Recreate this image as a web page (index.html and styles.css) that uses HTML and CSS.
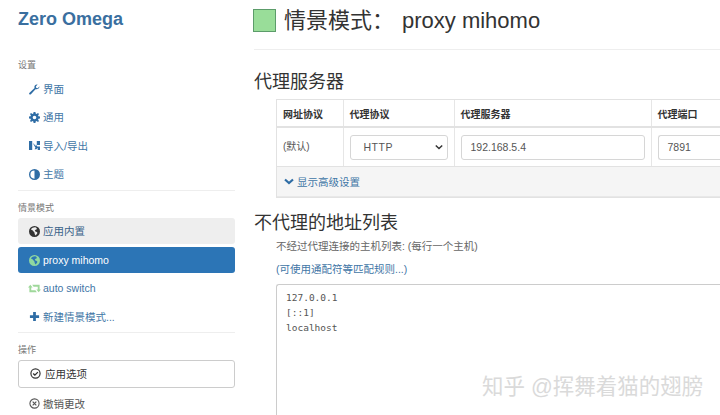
FILE: index.html
```html
<!DOCTYPE html>
<html lang="zh-CN">
<head>
    <meta charset="UTF-8">
    <title>Zero Omega</title>
    <link rel="stylesheet" href="styles.css">
</head>
<body>
    <div class="page">
        <aside class="sidebar">
            <h1 class="brand">Zero Omega</h1>
            <div class="nav-label first">设置</div>
            <a class="nav-item">
                <svg class="icon" viewBox="0 0 12 12"><path d="M11.400 2.600 9.400 4.500 7.800 4.200 7.500 2.600 9.400.6C7.600 0 5.700 1.300 5.900 3.400c0 .4.1.7.2 1L.6 9.500c-.7.7-.6 1.300-.2 1.700.5.5 1.100.5 1.700-.1l5-5.500c2.300.7 4.900-1.100 4.300-3.500z"/></svg>
                界面
            </a>
            <a class="nav-item">
                <svg class="icon" viewBox="0 0 12 12"><path fill-rule="evenodd" d="M5 0h2l.3 1.700 1 .4L9.800 1.100l1.100 1.100-1 1.500.4 1L12 5v2l-1.700.3-.4 1 1 1.500-1.100 1.100-1.500-1-1 .4L7 12H5l-.3-1.700-1-.4-1.500 1-1.100-1.100 1-1.500-.4-1L0 7V5l1.700-.3.4-1-1-1.500 1.100-1.100 1.500 1 1-.4zM6 4a2 2 0 1 0 0 4 2 2 0 0 0 0-4z"/></svg>
                通用
            </a>
            <a class="nav-item">
                <svg class="icon" viewBox="0 0 12 12"><path d="M0 1h3.500v10H0zM8.500 1H12v4.500H8.500zM4 3l3.500 3.500V5L9 7H12v4H9.500V8.500L8 10H6l1-1.500z"/></svg>
                导入/导出
            </a>
            <a class="nav-item">
                <svg class="icon" viewBox="0 0 12 12"><path fill-rule="evenodd" d="M6 0a6 6 0 1 1 0 12A6 6 0 0 1 6 0zm0 1.500a4.500 4.500 0 0 0 0 9z"/></svg>
                主题
            </a>
            <hr class="nav-rule">
            <div class="nav-label">情景模式</div>
            <a class="nav-item pill hover">
                <svg class="icon dark" viewBox="0 0 12 12"><path fill-rule="evenodd" d="M6 0a6 6 0 1 1 0 12A6 6 0 0 1 6 0zM2 3.500c.8 1 2 .8 2.500 2 .3 1 1.500.8 1.500 2 0 1 .5 2 1.200 2.800C8 9 9.500 8 9 7 8.500 6 7 6.500 6.500 5.500 6 4.500 7.500 4 8.500 3.500 8.800 3 8.500 2 7.500 1.500 5.500 1 3.500 1.800 2 3.500z"/></svg>
                应用内置
            </a>
            <a class="nav-item pill active">
                <svg class="icon green" viewBox="0 0 12 12"><path fill-rule="evenodd" d="M6 0a6 6 0 1 1 0 12A6 6 0 0 1 6 0zM2 3.500c.8 1 2 .8 2.500 2 .3 1 1.500.8 1.500 2 0 1 .5 2 1.200 2.800C8 9 9.500 8 9 7 8.500 6 7 6.500 6.500 5.500 6 4.500 7.500 4 8.500 3.500 8.800 3 8.500 2 7.500 1.500 5.500 1 3.500 1.800 2 3.500z"/></svg>
                proxy mihomo
            </a>
            <a class="nav-item">
                <svg class="icon wide light-green" viewBox="0 0 14 10"><path d="M2.500 1 5 4H3.500v3H8l1.500 2H1.500V4H0zM11.500 9 9 6h1.500V3H6L4.500 1h8v5H14z"/></svg>
                auto switch
            </a>
            <a class="nav-item">
                <svg class="icon" viewBox="0 0 12 12"><path d="M4.500 1h3v3.500H11v3H7.500V11h-3V7.500H1v-3h3.500z"/></svg>
                新建情景模式...
            </a>
            <hr class="nav-rule tight">
            <div class="nav-label">操作</div>
            <a class="apply-btn">
                <svg class="icon dark" viewBox="0 0 12 12"><circle cx="6" cy="6" r="5" fill="none" stroke="currentColor" stroke-width="1.300"/><path d="M3.500 6 5.300 7.800 8.600 4.500" fill="none" stroke="currentColor" stroke-width="1.500"/></svg>
                应用选项
            </a>
            <a class="discard">
                <svg class="icon dim" viewBox="0 0 12 12"><circle cx="6" cy="6" r="5" fill="none" stroke="currentColor" stroke-width="1.200"/><path d="M4 4l4 4M8 4l-4 4" fill="none" stroke="currentColor" stroke-width="1.300"/></svg>
                撤销更改
            </a>
        </aside>

        <main class="content">
            <div class="page-header">
                <span class="swatch"></span>
                <h2 class="page-title"><span>情景模式：</span><span class="profile-name">proxy mihomo</span></h2>
            </div>

            <h3 class="section-title">代理服务器</h3>
            <div class="proxy-box">
                <table class="proxy-table">
                    <thead>
                        <tr>
                            <th class="col-scheme">网址协议</th>
                            <th class="col-protocol">代理协议</th>
                            <th class="col-server">代理服务器</th>
                            <th class="col-port">代理端口</th>
                        </tr>
                    </thead>
                    <tbody>
                        <tr>
                            <td>(默认)</td>
                            <td>
                                <div class="fake-select">HTTP
                                    <svg class="caret" viewBox="0 0 10 6"><path d="M1 1l4 4 4-4" fill="none" stroke="currentColor" stroke-width="1.800"/></svg>
                                </div>
                            </td>
                            <td><div class="field">192.168.5.4</div></td>
                            <td class="cut"><div class="field">7891</div></td>
                        </tr>
                    </tbody>
                </table>
                <div class="proxy-footer">
                    <svg class="chevron" viewBox="0 0 10 7"><path d="M1 1.500l4 3.500 4-3.500" fill="none" stroke="currentColor" stroke-width="2.200"/></svg>
                    显示高级设置
                </div>
            </div>

            <h3 class="section-title bypass-title">不代理的地址列表</h3>
            <div class="bypass">
                <p class="help">不经过代理连接的主机列表: (每行一个主机)</p>
                <p class="help-link">(可使用通配符等匹配规则...)</p>
                <div class="bypass-list">127.0.0.1<br>[::1]<br>localhost</div>
            </div>
        </main>
    </div>
    <div class="watermark">知乎 @挥舞着猫的翅膀</div>
</body>
</html>
```

FILE: styles.css
```css
* {
    box-sizing: border-box;
    margin: 0;
    padding: 0;
}

html, body {
    width: 720px;
    height: 415px;
    overflow: hidden;
}

body {
    position: relative;
    font-family: "Liberation Sans", "Noto Sans CJK SC", sans-serif;
    font-size: 10px;
    line-height: 14px;
    color: #333;
    background-color: #fff;
}

.page {
    display: flex;
    height: 415px;
}

.sidebar {
    flex: none;
    width: 254px;
    padding: 9px 19px 0 18px;
}

.brand {
    font-size: 18px;
    line-height: 20px;
    font-weight: bold;
    color: #3a6f9f;
    margin-bottom: 30px;
}

.nav-label {
    font-size: 9px;
    line-height: 12px;
    color: #777;
    margin-bottom: 4px;
}

.nav-item {
    display: flex;
    align-items: center;
    gap: 3px;
    height: 28.300px;
    padding-left: 11px;
    font-size: 10.500px;
    color: #3f76a6;
}

.icon {
    flex: none;
    width: 11px;
    height: 11px;
    fill: #2f6da5;
    color: #2f6da5;
}

.icon.wide {
    width: 13px;
    margin-left: -1px;
    margin-right: -1px;
}

.icon.dark {
    fill: #333;
    color: #333;
}

.icon.dim {
    color: #555;
}

.icon.green {
    fill: #8fd8a0;
}

.icon.light-green {
    fill: #9fd89a;
}

.pill {
    height: 26px;
    border-radius: 3px;
}

.pill.hover {
    background-color: #eee;
    color: #3a6289;
    margin-bottom: 3px;
}

.pill.active {
    background-color: #2c75b6;
    color: #fff;
    margin-bottom: 1px;
}

.nav-rule {
    border: none;
    border-top: 1px solid #eee;
    margin: 2px 0 11px;
}

.nav-rule.tight {
    margin-top: 1px;
}

.apply-btn {
    display: flex;
    align-items: center;
    gap: 4px;
    height: 28px;
    padding-left: 11px;
    border: 1px solid #ccc;
    border-radius: 3px;
    font-size: 10.500px;
    color: #333;
}

.discard {
    display: flex;
    align-items: center;
    gap: 3px;
    height: 32px;
    padding-left: 11px;
    font-size: 10.500px;
    color: #555;
}

.content {
    flex: none;
    width: 466px;
}

.page-header {
    display: flex;
    align-items: center;
    gap: 8px;
    height: 50px;
    padding: 0 0 9px 0;
    border-bottom: 1px solid #eee;
    width: 466px;
}

.swatch {
    flex: none;
    width: 23px;
    height: 23px;
    margin-left: -1px;
    background-color: #99dd99;
    border: 1px solid #5c9c6a;
}

.page-title {
    display: flex;
    margin-top: 2px;
    font-size: 22px;
    line-height: 30px;
    font-weight: normal;
    color: #333;
}

.page-title span:first-child {
    width: 118px;
}

.section-title {
    font-size: 18px;
    line-height: 24px;
    font-weight: normal;
    color: #333;
    margin: 20px 0 5px;
}

.proxy-box {
    width: 444px;
    margin-left: 22px;
    border: 1px solid #e2e2e2;
    border-right: none;
}

.proxy-table {
    width: 443px;
    table-layout: fixed;
    border-collapse: collapse;
}

.proxy-table th,
.proxy-table td {
    padding: 0 6px;
    text-align: left;
    border-right: 1px solid #e6e6e6;
    font-size: 10px;
}

.proxy-table th {
    height: 27px;
    padding-top: 3px;
    border-bottom: 2px solid #e2e2e2;
    color: #333;
}

.proxy-table td {
    height: 39px;
    color: #555;
}

.proxy-table th.col-port,
.proxy-table td.cut {
    padding-right: 0;
    border-right: none;
}

.col-scheme { width: 66px; }
.col-protocol { width: 111px; }
.col-server { width: 197px; }
.col-port { width: 69px; }

.fake-select,
.field {
    display: flex;
    align-items: center;
    height: 25px;
    border: 1px solid #d6d6d6;
    border-radius: 3px;
    color: #555;
    font-size: 10.500px;
    background-color: #fff;
}

.cut .field {
    border-right: none;
    border-radius: 3px 0 0 3px;
}

.fake-select {
    justify-content: space-between;
    padding: 0 4px 0 13px;
    letter-spacing: 0.500px;
}

.caret {
    width: 8px;
    height: 6px;
    color: #333;
}

.field {
    padding-left: 9px;
}

.proxy-footer {
    display: flex;
    align-items: center;
    gap: 3px;
    height: 31px;
    padding-left: 7px;
    background-color: #f5f5f5;
    border-top: 1px solid #e2e2e2;
    border-bottom: 1px solid #e8e8e8;
    font-size: 10.500px;
    color: #3f76a6;
}

.chevron {
    width: 10px;
    height: 7px;
    color: #2f6da5;
}

.bypass-title {
    margin: 13px 0 0;
}

.bypass {
    margin-left: 22px;
}

.help {
    font-size: 10.500px;
    line-height: 14px;
    color: #666;
    margin-top: 4px;
}

.help-link {
    font-size: 10.500px;
    line-height: 14px;
    color: #3f76a6;
    margin-top: 9px;
}

.bypass-list {
    width: 444px;
    height: 140px;
    margin-top: 8px;
    padding: 5px 9px;
    border: 1px solid #ccc;
    border-right: none;
    border-radius: 3px 0 0 3px;
    font-family: "DejaVu Sans Mono", "Liberation Mono", monospace;
    font-size: 9.500px;
    line-height: 15px;
    color: #555;
}

/* site watermark burned into the screenshot */
.watermark {
    position: absolute;
    left: 482px;
    top: 374px;
    font-size: 21.500px;
    line-height: 26px;
    white-space: nowrap;
    color: #dadada;
    text-shadow: 0 0 2px #fff;
}
```
